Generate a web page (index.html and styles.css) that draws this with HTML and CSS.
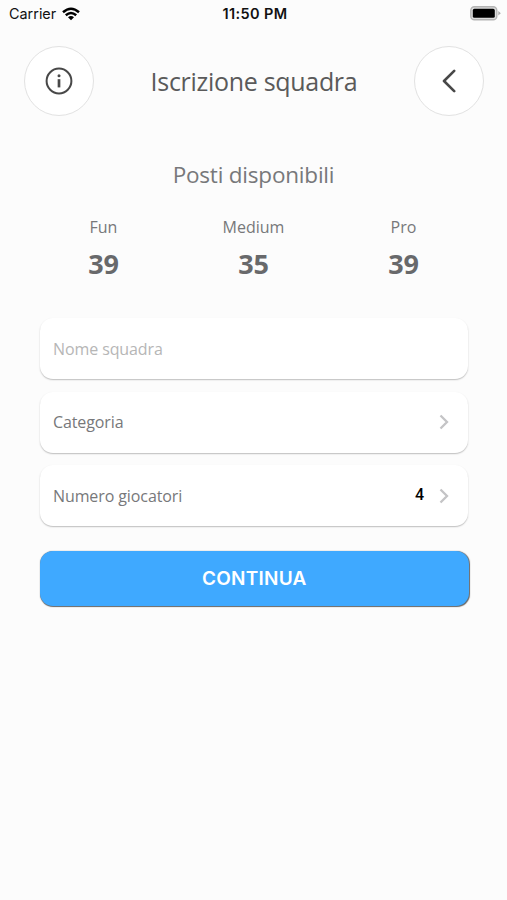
FILE: index.html
```html
<!DOCTYPE html>
<html lang="it">
<head>
<meta charset="utf-8">
<title>Iscrizione squadra</title>
<link rel="stylesheet" href="styles.css">
</head>
<body>
<div class="status">
  <div class="carrier"><span class="carrier-name">Carrier</span>
    <svg width="18" height="14" viewBox="0 0 18 14" fill="none" stroke="#000" stroke-width="2.5"><path d="M1 5.2Q9-1.8 17 5.2M3.8 8.3Q9 3.8 14.2 8.3"/><path d="M6 10.2Q9 7.8 12 10.2L9 13.2Z" fill="#000" stroke="none"/></svg>
  </div>
  <span class="clock">11:50 PM</span>
  <svg class="battery" width="31" height="15" viewBox="0 0 31 15"><rect x=".8" y=".8" width="26" height="13" rx="3.6" fill="#ddd" stroke="#b4b4b4" stroke-width="1.4"/><rect x="2.8" y="2.8" width="22" height="9" rx="1.6"/><path d="M28.3 5.1L30.8 7.3L28.3 9.5Z" fill="#aaa"/></svg>
</div>
<header class="header">
  <button class="round" aria-label="Info"><svg width="28" height="28" viewBox="0 0 28 28" fill="none" stroke="#484848" stroke-width="2"><circle cx="14" cy="14" r="12.4"/><path d="M14 12.2V20.4" stroke-width="2.7"/><circle cx="14" cy="8.8" r="1.5" fill="#484848" stroke="none"/></svg></button>
  <h1 class="title">Iscrizione squadra</h1>
  <button class="round" aria-label="Indietro"><svg width="14" height="24" viewBox="0 0 14 24" fill="none" stroke="#484848" stroke-width="2.6" stroke-linecap="round" stroke-linejoin="round"><path d="M12.2 1.8L2 12L12.2 22.2"/></svg></button>
</header>
<main>
  <h2 class="subtitle">Posti disponibili</h2>
  <div class="slots">
    <div class="slot"><span class="slot-name">Fun</span><strong class="slot-count">39</strong></div>
    <div class="slot"><span class="slot-name">Medium</span><strong class="slot-count">35</strong></div>
    <div class="slot"><span class="slot-name">Pro</span><strong class="slot-count">39</strong></div>
  </div>
  <div class="form">
    <div class="field placeholder"><span class="label">Nome squadra</span></div>
    <div class="field"><span class="label">Categoria</span><svg class="chevron" width="10" height="16" viewBox="0 0 10 16"><path d="M1.5 1.5L8 8L1.5 14.5"/></svg></div>
    <div class="field"><span class="label">Numero giocatori</span><span class="value">4</span><svg class="chevron" width="10" height="16" viewBox="0 0 10 16"><path d="M1.5 1.5L8 8L1.5 14.5"/></svg></div>
    <button class="submit">CONTINUA</button>
  </div>
</main>
</body>
</html>
```
FILE: styles.css
```css
* { box-sizing: border-box; }
body {
  margin: 0;
  height: 900px;
  overflow: hidden;
  background: #fcfcfc;
  color: #77787a;
  font-family: "Open Sans", "Noto Sans", sans-serif;
}
.status {
  display: grid;
  grid-template-columns: 1fr auto 1fr;
  align-items: center;
  height: 28px;
  padding: 0 6px 0 9px;
  color: #111;
  font: 14.4px/20px Inter, sans-serif;
}
.carrier { display: flex; align-items: center; gap: 6px; height: 26px; }
.clock { font-weight: 600; font-size: 14.5px; letter-spacing: .4px; }
.battery { justify-self: end; margin-top: -2px; }
.header {
  display: flex;
  align-items: center;
  justify-content: space-between;
  height: 70px;
  margin-top: 17.5px;
  padding: 0 23px 0 24px;
}
.round {
  display: flex;
  align-items: center;
  justify-content: center;
  width: 70px;
  height: 70px;
  padding: 0;
  border: 1.5px solid #e2e2e2;
  border-radius: 50%;
  background: #fff;
}
.title { margin: 0; color: #5a5a5a; font-size: 25px; line-height: 34px; font-weight: 400; letter-spacing: -.3px; }
.subtitle { margin: 43.5px 0 0; font-size: 22.5px; line-height: 32px; font-weight: 400; letter-spacing: -.2px; text-align: center; }
.slots { display: grid; grid-template-columns: repeat(3, 150px); justify-content: center; margin-top: 24px; }
.slot { display: flex; flex-direction: column; align-items: center; }
.slot-name { font-size: 16px; line-height: 24px; }
.slot-count { font-size: 27px; line-height: 36px; margin-top: 7px; color: #68696b; font-weight: 700; letter-spacing: -.3px; }
.form { display: flex; flex-direction: column; gap: 12.5px; margin: 36px 38px 0 40px; }
.field {
  display: flex;
  align-items: center;
  height: 61px;
  margin-right: 1px;
  padding: 0 19px 0 13px;
  border-radius: 13px;
  background: #fff;
  box-shadow: 0 1px 1.5px rgba(0, 0, 0, .25);
}
.label { flex: 1; font-size: 16px; line-height: 24px; letter-spacing: -.1px; }
.placeholder { color: #b6b6b6; }
.value { margin: -2px 15px 0 0; color: #000; font: 500 16px/20px Roboto, sans-serif; }
.chevron { fill: none; stroke: #c4c4c6; stroke-width: 2.3; }
.submit {
  height: 55.5px;
  margin-top: 12px;
  margin-right: .5px;
  padding: 2px 0 0;
  border: 0;
  border-radius: 13px;
  background: #3fa9ff;
  box-shadow: .3px .5px 1px rgba(0, 0, 0, .6);
  color: #fff;
  font: 600 19px/24px Inter, sans-serif;
  letter-spacing: .25px;
}
```
